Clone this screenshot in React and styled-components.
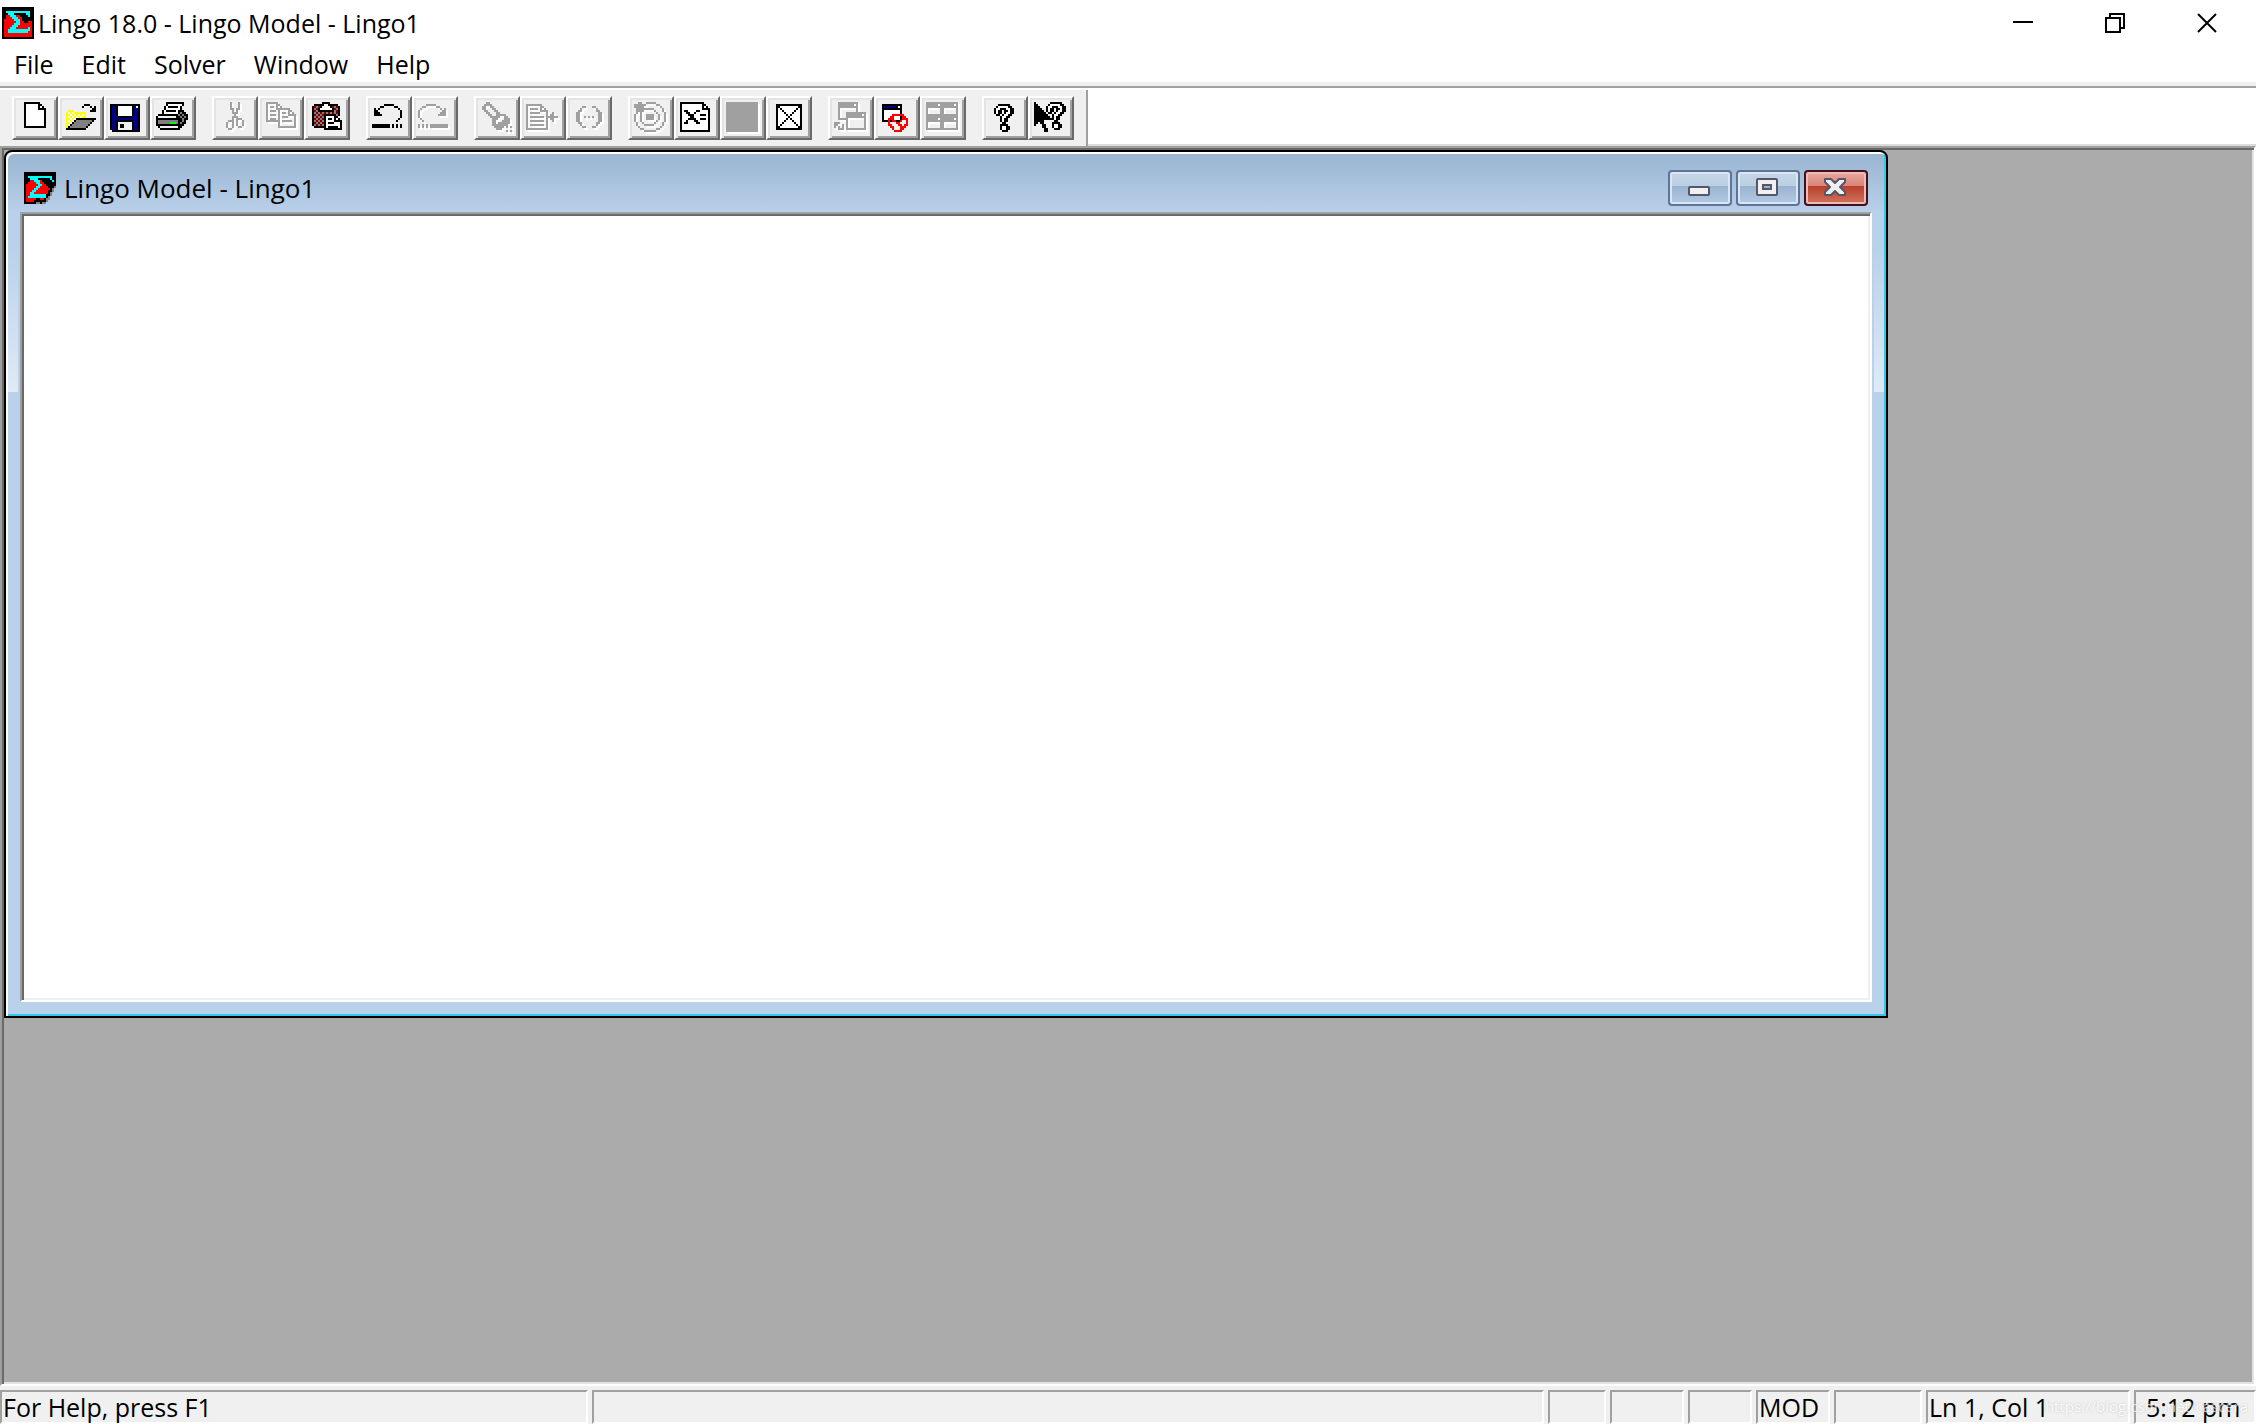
import React from "react";
import styled, { createGlobalStyle, css } from "styled-components";

const GlobalStyle = createGlobalStyle`
  *, *::before, *::after { box-sizing: border-box; }
  html, body { margin: 0; padding: 0; }
  body { background: #f0f0f0; }
  button, textarea { font: inherit; color: inherit; margin: 0; }
`;

/* ---------- pixel art ---------- */

const PALETTE = {
  K: "#000000",
  W: "#ffffff",
  G: "#a0a0a0",
  S: "#808080",
  Y: "#ffff00",
  N: "#000080",
  R: "#ff0000",
  M: "#800000",
  L: "#00ff00",
  C: "#00ffff",
  E: "#f0f0f0",
};

function toPaths(rows, x0, y0) {
  const paths = {};
  rows.forEach((row, y) => {
    let x = 0;
    while (x < row.length) {
      const c = row[x];
      let n = 1;
      while (row[x + n] === c) n += 1;
      if (c !== ".") paths[c] = (paths[c] || "") + `M${x0 + x} ${y0 + y}h${n}v1h-${n}z`;
      x += n;
    }
  });
  return paths;
}

function Pixels({ rows, x = 0, y = 0, shadow }) {
  const paths = Object.entries(toPaths(rows, x, y));
  return (
    <>
      {shadow && paths.map(([c, d]) => <path key={"s" + c} d={d} fill="#fff" transform="translate(1 1)" />)}
      {paths.map(([c, d]) => <path key={c} d={d} fill={PALETTE[c]} />)}
    </>
  );
}

const mirror = (rows) => rows.map((r) => r.split("").reverse().join(""));
const recolor = (rows, c) => rows.map((r) => r.replace(/K/g, c));

const UNDO = [
  "......KKKKK....",
  "....KK.....KK..",
  ".K.K.........K.",
  ".KK...........K",
  ".KKK..........K",
  ".KKKK.........K",
  "..............K",
  ".............K.",
  "............K..",
  "...............",
  "KKKKKKKKK.K.K.K",
  "KKKKKKKKK.K.K.K",
];

const CROSSED = Array.from({ length: 13 }, (_, y) =>
  Array.from({ length: 13 }, (_, x) =>
    x === 0 || y === 0 || x === 12 || y === 12 || x === y || x + y === 12 ? "K" : "W"
  ).join("")
);

const MINI = ["GGGGGGGG", "GGGGGG.G", "GGGGGGGG", "G......G", "G......G", "G......G", "GGGGGGGG"];
const TILES = [...MINI, ...MINI].map((r) => r + r);

const ICONS = {
  new: { x: 6, y: 3, rows: [
    "KKKKKKKK...",
    "KWWWWWWKK..",
    "KWWWWWWKWK.",
    "KWWWWWWKKKK",
    "KWWWWWWWWWK",
    "KWWWWWWWWWK",
    "KWWWWWWWWWK",
    "KWWWWWWWWWK",
    "KWWWWWWWWWK",
    "KWWWWWWWWWK",
    "KWWWWWWWWWK",
    "KWWWWWWWWWK",
    "KKKKKKKKKKK",
  ] },
  open: { x: 4, y: 4, rows: [
    ".........KKK...",
    "........K...K.K",
    ".............KK",
    ".YYY........KKK",
    "YWYWYYYYYY.....",
    "YYWYWYWYWY.....",
    "YWYWYWYWYY.....",
    "YYWYWKKKKKKKKKK",
    "YWYWKSSSSSSSSK.",
    "YYWKSSSSSSSSK..",
    "YWKSSSSSSSSK...",
    "YKSSSSSSSSK....",
    "KKKKKKKKKK.....",
  ] },
  save: { x: 3, y: 4, rows: [
    "KKKKKKKKKKKKKKK",
    "KNNKWWWWWWWKNWK",
    "KNNKWWWWWWWKNNK",
    "KNNKWWWWWWWKNNK",
    "KNNKWWWWWWWKNNK",
    "KNNKWWWWWWWKNNK",
    "KNNNKKKKKKKNNNK",
    "KNNNNNNNNNNNNNK",
    "KNNKKKKKKKKKNNK",
    "KNNKEEEEEEEKNNK",
    "KNNKEKKEEEEKNNK",
    "KNNKEKKEEEEKNNK",
    "KNNKEEEEEEEKNNK",
    ".KKKKKKKKKKKKKK",
  ] },
  print: { x: 3, y: 3, rows: [
    ".....KKKKKKKKK..",
    ".....KWWWWWWWK..",
    "....KWKKKKKWK...",
    "....KWWWWWWWK...",
    "...KWKKKKKWKKK..",
    "...KWWWWWWWKSKK.",
    ".KKKKKKKKKKSKSKK",
    "KEEEEEEEEEKKSKSK",
    "KKKKKKKKKKKKKSKK",
    "KSSSSSSSSSSKKSK.",
    "KSSSSSSLLLSKSKK.",
    "KKKKKKKKKKKKKK..",
    ".KEEEEEEEEEKK...",
    "..KKKKKKKKKK....",
  ] },
  cut: { x: 7, y: 3, off: true, rows: [
    "..G...G..",
    "..G...G..",
    "..G...G..",
    "..GG.GG..",
    "...G.G...",
    "...GGG...",
    "....G....",
    "...GGG...",
    "...G.GGG.",
    ".GGG.G..G",
    "G..G.G..G",
    "G..G.G..G",
    "G..G..GG.",
    ".GG......",
  ] },
  copy: { x: 4, y: 3, off: true, rows: [
    "GGGGGG.........",
    "G....GG........",
    "G.GG.G.G.......",
    "G....GGGGGGG...",
    "G.GGG.G....GG..",
    "G.....G.GG.G.G.",
    "G.GGG.G....GGGG",
    "G.....G.GGG...G",
    "G.GGG.G.......G",
    "GGGGGGG.GGGGG.G",
    "......G.......G",
    "......G.......G",
    "......GGGGGGGGG",
  ] },
  paste: { x: 4, y: 3, rows: [
    ".....KKKK......",
    ".KKKKKWWKKKKK..",
    "KMSMKWWWWKMSMK.",
    "KSMKWWWWWWKMSK.",
    "KMSKKKKKKKKSMK.",
    "KSMSMSMSMSMSMK.",
    "KMSMSMKKKKKKSK.",
    "KSMSMSKWWWWKK..",
    "KMSMSMKWKKWKWK.",
    "KSMSMSKWWWWKKKK",
    "KMSMSMKWKKKWWWK",
    "KSMSMSKWWWWWWWK",
    ".KKKKKKWKKKKKWK",
    "......KKKKKKKKK",
  ] },
  undo: { x: 3, y: 4, rows: UNDO },
  redo: { x: 3, y: 4, off: true, rows: recolor(mirror(UNDO), "G") },
  find: { x: 4, y: 3, off: true, rows: [
    "..GG...........",
    ".GGGG..........",
    "GG..GG.........",
    "GG...GG........",
    ".GG...GG.......",
    "..GG...GG......",
    "...GG..GGGGG...",
    "....GGGGG..GG..",
    ".....GGG...GGG.",
    ".....GG...GGGG.",
    ".....GG.GGGGGG.",
    ".....GGGGGGGG..",
    "......GGGGG.G.G",
    ".......GGG.....",
    "............G.G",
  ] },
  goto: { x: 3, y: 4, off: true, rows: [
    "GGGGGGGG........",
    "G......GG.......",
    "G.GGGG.G.G......",
    "G......GGGG.....",
    "G.GGGGG...G..G..",
    "G.........G.GG..",
    "G.GGGGGGG.GGGGGG",
    "G.........G.GG..",
    "G.GGGGGGG.G..G..",
    "G.........G.....",
    "G.GGGGGGG.G.....",
    "G.........G.....",
    "GGGGGGGGGGG.....",
  ] },
  parens: { x: 5, y: 5, off: true, rows: [
    "...GG...GG...",
    "..G.......G..",
    ".GG.......GG.",
    "GG.........GG",
    "GG.........GG",
    "GG..G.G.G..GG",
    "GG.........GG",
    "GG.........GG",
    ".GG.......GG.",
    "..G.......G..",
    "...GG...GG...",
  ] },
  solve: { x: 3, y: 3, off: true, rows: [
    "..GG..GGGGG.....",
    "GGGGGG.....GG...",
    "GGGGG........G..",
    ".GGGGGGGGG....G.",
    ".GGGG.....G...G.",
    ".G.G.......G...G",
    "G..G..GGGG..G..G",
    "G..G..GGGG..G..G",
    "G..G..GGGG..G..G",
    "G..G.......G...G",
    ".G..G.....G...G.",
    ".G...GGGGG....G.",
    "..G..........G..",
    "...GG......GG...",
    ".....GGGGGG.....",
  ] },
  solution: { x: 3, y: 3, rows: [
    "KKKKKKKKKKKK...",
    "KWWWWWWWWWWKK..",
    "KWWWWWWWWWWKWK.",
    "KWWWWWWWWWWKKKK",
    "KWKKWWWWKKWWWWK",
    "KWWKKWWKWWWWWWK",
    "KWWWKKKWWWKKKWK",
    "KWWWWKKWWWWWWWK",
    "KWWWKKKKWWKKKWK",
    "KWWKWWWKKWWWWWK",
    "KWKKWWWWKKWWWWK",
    "KWWWWWWWWWWWWWK",
    "KWWWWWWWWWWWWWK",
    "KWWWWWWWWWWWWWK",
    "KKKKKKKKKKKKKKK",
  ] },
  stop: { x: 3, y: 3, off: true, rows: Array(15).fill("GGGGGGGGGGGGGGGG") },
  matrix: { x: 5, y: 4, rows: CROSSED },
  windows: { x: 3, y: 3, off: true, rows: [
    "..GGGGGGGGGG....",
    "..GGGGGGGG.G....",
    "..GGGGGGGGGG....",
    "..G........G....",
    "..G........G....",
    "..G...GGGGGGGGGG",
    "..G...GGGGGGGG.G",
    "..G...GGGGGGGGGG",
    "..GGGGG........G",
    "......G........G",
    "GGG...G........G",
    "GG..G.G........G",
    "G.G.G.G........G",
    "..GGG.GGGGGGGGGG",
  ] },
  closeAll: { x: 4, y: 4, rows: [
    "KKKKKKKKKK....",
    "KNNNNNNKWK....",
    "KKKKKKKKKK....",
    "KWWWWWWWWK....",
    "KWWWWWWWWK....",
    "KWWWWRRRRRR...",
    "KWWWRRWWWKRR..",
    "KWWRRRWWWKRRR.",
    "KKKRKRRKKR..R.",
    "...R...RR...R.",
    "...RR...RR.RR.",
    "....RR...RRR..",
    ".....R...RR...",
    "......RRRR....",
  ] },
  tile: { x: 3, y: 3, off: true, rows: TILES },
  help: { x: 6, y: 4, rows: [
    "..KKKKKK..",
    ".KWWWWWKK.",
    "KWWKKKWWKK",
    "KWKK.KKWKK",
    "KWKK.KWWKK",
    ".KK.KWWKK.",
    "...KWWKK..",
    "...KWKK...",
    "...KWKK...",
    "....KK....",
    "...KKKK...",
    "...KWWKK..",
    "...KWWKK..",
    "....KKK...",
  ] },
  pointerHelp: { x: 3, y: 3, rows: [
    "K.......KKKKKK..",
    "KK.....KWWWWWKK.",
    "KKK...KWWKKKWWKK",
    "KKKK..KWKK.KKWKK",
    "KKKKK.KWKK.KWWKK",
    "KKKKKK.KK.KWWKK.",
    "KKKKKKK..KWWKK..",
    "KKKKKKKK.KWKK...",
    "KKKKKKKKKKWKK...",
    "KKKKK.....KK....",
    "KK.KK....KKKK...",
    "K...KK...KWWKK..",
    "....KK...KWWKK..",
    ".....KK...KKK...",
    ".....KK.........",
  ] },
};

const APP_LOGO = [
  "KKKKKKKKKKKKKKKK",
  "KKKKKKKKKKKKKKKK",
  "KKCCCCCCCCCCCCKK",
  "KKKCCCKKKKKKCCKK",
  "KKRRCCCRRKKKKCKK",
  "KKRRRCCCRRKKKKKK",
  "KRRRRRCCCRKKKKKK",
  "KRRRRRRCCRRKKRRK",
  "KRRRRRCCCRRRRRRK",
  "KRRRRCCCRRRRRRRK",
  "KRRRCCCRRRRRRCRK",
  "KRRCCCCCCCCCCCRK",
  "KRRCCCCCCCCCCRRK",
  "KRRRRRRRRRRRRRRK",
  "KRRRRRRRRRRRRRRK",
  "KKKKKKKKKKKKKKKK",
];

const MODEL_LOGO = [
  "KKKKKKKKKKKKKKKK",
  "KKKKKKKKKKKKKKKK",
  "KKCCCCCCCCCCCCKK",
  "KKKCCCCKKKKKKCKK",
  "KKKRRCCCRKKKKKCK",
  "KKRRRRCCRRKKKKKK",
  "KRRRRRRCCRRKKKKK",
  "KRRRRRCCRRRRKKKS",
  "KRRRRCCRRRRRRKS.",
  "KRRRCCRRRRRRKKS.",
  "KRRCCRRRRRRRKS..",
  "KRRCCCCCCCCKKS..",
  "KRCCCCCCCCCKS...",
  "KRRRRRKKRRKSS...",
  "KRRRRKKKKKKS....",
  "KKKKKKSSKSS.....",
];

const LogoSvg = styled.svg`
  width: 32px;
  height: 32px;
  flex: none;
  shape-rendering: crispEdges;
`;

const Logo = ({ rows }) => (
  <LogoSvg viewBox="0 0 16 16" aria-hidden="true">
    <Pixels rows={rows} />
  </LogoSvg>
);

/* ---------- frame ---------- */

const Shell = styled.div`
  min-height: 100vh;
  display: flex;
  flex-direction: column;
  background: #f0f0f0;
  color: #000;
  font-family: "Open Sans", "Noto Sans", sans-serif;
  font-size: 25px;
  line-height: 32px;
`;

const TitleBar = styled.header`
  display: flex;
  align-items: center;
  height: 46px;
  padding: 0 3px 0 2px;
  background: #fff;
`;

const Title = styled.h1`
  flex: 1;
  margin: 0;
  padding-left: 4px;
  font-size: 25px;
  line-height: 32px;
  font-weight: 400;
`;

const CaptionButton = styled.button`
  width: 92px;
  height: 44px;
  padding: 0;
  border: 0;
  background: transparent;
  display: grid;
  place-items: center;
`;

const CaptionIcon = styled.svg`
  width: 20px;
  height: 20px;
  fill: none;
  stroke: #000;
  stroke-width: 2;
`;

const MenuBar = styled.nav`
  display: flex;
  height: 36px;
  background: #fff;
`;

const MenuItem = styled.button`
  padding: 0 14px;
  border: 0;
  background: transparent;
  font-size: 25px;
  line-height: 36px;
`;

/* ---------- toolbar ---------- */

const Rebar = styled.div`
  margin-top: 4px;
  display: flex;
  border-top: 2px solid #a0a0a0;
  background: #fff;
`;

const ToolBar = styled.div`
  display: flex;
  gap: 16px;
  margin-top: 2px;
  padding: 6px 12px;
  border-right: 2px solid #a0a0a0;
  background: #f0f0f0;
`;

const RebarRest = styled.div`
  flex: 1;
  border-bottom: 2px solid #dcdcdc;
`;

const ToolGroup = styled.div`
  display: flex;
`;

const ToolButton = styled.button`
  width: 46px;
  height: 44px;
  padding: 2px;
  border: 2px solid;
  border-color: #fff #696969 #696969 #fff;
  background: #f0f0f0;
  box-shadow: inset 2px 2px #e3e3e3, inset -2px -2px #a0a0a0;
`;

const ToolIcon = styled.svg`
  display: block;
  width: 38px;
  height: 36px;
  shape-rendering: crispEdges;
`;

const TOOL_GROUPS = [
  [["new", "New"], ["open", "Open"], ["save", "Save"], ["print", "Print"]],
  [["cut", "Cut"], ["copy", "Copy"], ["paste", "Paste"]],
  [["undo", "Undo"], ["redo", "Redo"]],
  [["find", "Find"], ["goto", "Go to line"], ["parens", "Match parenthesis"]],
  [["solve", "Solve"], ["solution", "Solution"], ["stop", "Stop"], ["matrix", "Picture"]],
  [["windows", "Send to back"], ["closeAll", "Close all"], ["tile", "Tile"]],
  [["help", "Help topics"], ["pointerHelp", "Context help"]],
];

function Tool({ id, label }) {
  const icon = ICONS[id];
  return (
    <ToolButton type="button" aria-label={label} disabled={icon.off}>
      <ToolIcon viewBox="2 2 19 18" aria-hidden="true">
        <Pixels rows={icon.rows} x={icon.x} y={icon.y} shadow={icon.off} />
      </ToolIcon>
    </ToolButton>
  );
}

/* ---------- workspace ---------- */

const Workspace = styled.main`
  position: relative;
  flex: 1;
  border: 2px solid;
  border-color: #a0a0a0 #fff #fff #a0a0a0;
  background: #ababab;
  box-shadow: inset 2px 2px #696969, inset -2px -2px #e3e3e3;
`;

const ChildWindow = styled.section`
  position: absolute;
  left: 2px;
  top: 2px;
  width: 1884px;
  height: 868px;
  display: flex;
  flex-direction: column;
  border: 2px solid #000;
  border-radius: 8px 8px 0 0;
  overflow: hidden;
  background: linear-gradient(#99b4d1, #b9d1ea 62px);
  box-shadow: inset 2px 2px #fff, inset -2px -2px #2fcbea;
  padding: 2px;
`;

const ChildTitleBar = styled.header`
  display: flex;
  align-items: center;
  gap: 8px;
  height: 58px;
  padding: 10px 16px 0 16px;
`;

const ChildTitle = styled.h2`
  flex: 1;
  margin: 0;
  font-size: 26px;
  line-height: 32px;
  font-weight: 400;
`;

const ChildButtons = styled.div`
  display: flex;
  gap: 4px;
`;

const ChildButton = styled.button`
  width: 64px;
  height: 36px;
  padding: 0 2px 2px 0;
  border: 2px solid #5f7496;
  border-radius: 4px;
  display: grid;
  place-items: center;
  background: linear-gradient(#c6d6e7, #bbcee3 44%, #9ab3d0 44%, #b2cae4);
  box-shadow: inset 0 0 0 2px #d9e6f3;
  ${(p) =>
    p.$danger &&
    css`
      border-color: #430f1f;
      background: linear-gradient(#e8a79f, #d9857a 44%, #b8402a 44%, #d1745f);
      box-shadow: inset 0 0 0 2px #ecbdb6;
    `}
`;

const ChildGlyph = styled.svg`
  width: 24px;
  height: 20px;
`;

const ClientRow = styled.div`
  flex: 1;
  display: flex;
`;

const SideEdge = styled.div`
  width: 12px;
  display: flex;
  justify-content: ${(p) => (p.$right ? "flex-end" : "flex-start")};
`;

const SideGlow = styled.div`
  width: 10px;
  height: 180px;
  background: linear-gradient(#b9d1ea 20%, #dfeaf6);
`;

const Editor = styled.textarea`
  flex: 1;
  min-width: 0;
  padding: 4px;
  resize: none;
  outline: 0;
  border: 2px solid;
  border-color: #a0a0a0 #fff #fff #a0a0a0;
  border-radius: 0;
  background: #fff;
  box-shadow: inset 2px 2px #696969, inset -2px -2px #f0f0f0;
`;

const BottomEdge = styled.div`
  height: 12px;
`;

/* ---------- status bar ---------- */

const StatusBar = styled.footer`
  position: relative;
  display: flex;
  gap: 4px;
  padding-top: 4px;
  background: #f0f0f0;
`;

const StatusCell = styled.div`
  flex: ${(p) => (p.$width ? "none" : 1)};
  width: ${(p) => (p.$width ? p.$width + "px" : "auto")};
  height: 34px;
  padding-left: ${(p) => (p.$inset ? 10 : 1)}px;
  border: 2px solid;
  border-color: #a0a0a0 #fff #fff #a0a0a0;
  font-size: 25px;
  line-height: 30px;
  white-space: nowrap;
`;

const Watermark = styled.span`
  position: absolute;
  right: 8px;
  bottom: 6px;
  font-size: 15px;
  line-height: 24px;
  color: #fff;
  text-shadow: 0 0 2px #b0b0b0;
  opacity: 0.7;
`;

const STATUS = [
  { text: "For Help, press F1", width: 588 },
  {},
  { width: 58 },
  { width: 74 },
  { width: 64 },
  { text: "MOD", width: 74 },
  { width: 88 },
  { text: "Ln 1, Col 1", width: 204 },
  { text: "5:12 pm", width: 122, inset: true },
];

export default function App() {
  return (
    <Shell>
      <GlobalStyle />
      <TitleBar>
        <Logo rows={APP_LOGO} />
        <Title>Lingo 18.0 - Lingo Model - Lingo1</Title>
        <CaptionButton type="button" aria-label="Minimize">
          <CaptionIcon viewBox="0 0 20 20"><path d="M0 9H20" shapeRendering="crispEdges" /></CaptionIcon>
        </CaptionButton>
        <CaptionButton type="button" aria-label="Restore">
          <CaptionIcon viewBox="0 0 20 20"><path d="M1 5H15V19H1ZM5 5V1H19V15H15" /></CaptionIcon>
        </CaptionButton>
        <CaptionButton type="button" aria-label="Close">
          <CaptionIcon viewBox="0 0 20 20"><path d="M1 1L19 19M19 1L1 19" /></CaptionIcon>
        </CaptionButton>
      </TitleBar>
      <MenuBar>
        {["File", "Edit", "Solver", "Window", "Help"].map((m) => (
          <MenuItem type="button" key={m}>{m}</MenuItem>
        ))}
      </MenuBar>
      <Rebar>
        <ToolBar role="toolbar">
          {TOOL_GROUPS.map((group, i) => (
            <ToolGroup key={i}>
              {group.map(([id, label]) => <Tool key={id} id={id} label={label} />)}
            </ToolGroup>
          ))}
        </ToolBar>
        <RebarRest />
      </Rebar>
      <Workspace>
        <ChildWindow>
          <ChildTitleBar>
            <Logo rows={MODEL_LOGO} />
            <ChildTitle>Lingo Model - Lingo1</ChildTitle>
            <ChildButtons>
              <ChildButton type="button" aria-label="Minimize model">
                <ChildGlyph viewBox="0 0 24 20">
                  <rect x="2" y="10" width="20" height="8" rx="1" fill="#f0f0f0" stroke="#54566a" strokeWidth="2" />
                </ChildGlyph>
              </ChildButton>
              <ChildButton type="button" aria-label="Maximize model">
                <ChildGlyph viewBox="0 0 24 20">
                  <rect x="2" y="2" width="20" height="16" rx="1" fill="#f0f0f0" stroke="#54566a" strokeWidth="2" />
                  <rect x="8" y="8" width="8" height="4" fill="#9ab3d0" stroke="#54566a" strokeWidth="2" />
                </ChildGlyph>
              </ChildButton>
              <ChildButton type="button" aria-label="Close model" $danger>
                <ChildGlyph viewBox="0 0 24 20">
                  <path
                    d="M2 2H8L12 6L16 2H22V5L17 10L22 15V18H16L12 14L8 18H2V15L7 10L2 5Z"
                    fill="#f0f0f0"
                    stroke="#54566a"
                    strokeWidth="2"
                    strokeLinejoin="round"
                  />
                </ChildGlyph>
              </ChildButton>
            </ChildButtons>
          </ChildTitleBar>
          <ClientRow>
            <SideEdge><SideGlow /></SideEdge>
            <Editor aria-label="Model text" spellCheck={false} />
            <SideEdge $right><SideGlow /></SideEdge>
          </ClientRow>
          <BottomEdge />
        </ChildWindow>
      </Workspace>
      <StatusBar>
        {STATUS.map((cell, i) => (
          <StatusCell key={i} $width={cell.width} $inset={cell.inset}>{cell.text}</StatusCell>
        ))}
        <Watermark>https://blog.csdn.net/cascera</Watermark>
      </StatusBar>
    </Shell>
  );
}
